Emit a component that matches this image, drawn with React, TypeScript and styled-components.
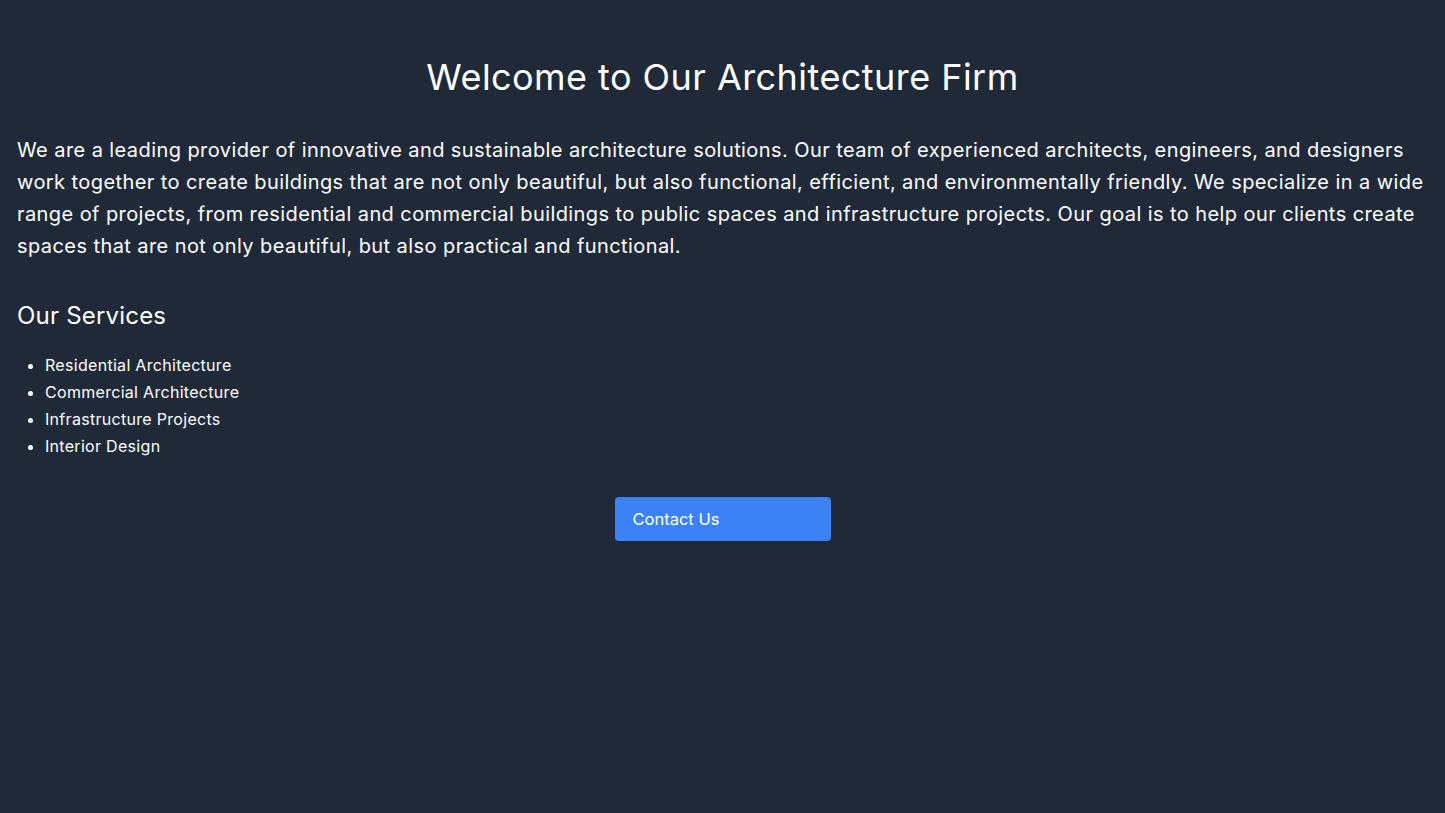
import React from "react";
import styled, { createGlobalStyle } from "styled-components";

const GlobalStyle = createGlobalStyle`
  html, body {
    margin: 0;
    padding: 0;
    background-color: #1f2937;
  }
  body {
    font-family: Inter, "Noto Sans", sans-serif;
    color: #ffffff;
  }
`;

const Page = styled.div`
  min-height: 813px;
  background-color: #1f2937;
  padding: 57px 16px 48px;
  box-sizing: border-box;
`;

const Title = styled.h1`
  margin: 0 0 37px;
  font-size: 36px;
  line-height: 40px;
  font-weight: 400;
  letter-spacing: 0.45px;
  text-align: center;
`;

const Intro = styled.p`
  margin: 0 0 38px;
  padding-left: 1px;
  font-size: 20px;
  line-height: 32px;
  letter-spacing: 0.42px;
`;

const SectionTitle = styled.h2`
  margin: 0 0 20px;
  padding-left: 1px;
  font-size: 24px;
  line-height: 32px;
  font-weight: 400;
  letter-spacing: 0.2px;
`;

const ServiceList = styled.ul`
  margin: 0 0 37px;
  padding-left: 29px;
  font-size: 16px;
  line-height: 27px;
  letter-spacing: 0.3px;
`;

const Actions = styled.div`
  display: flex;
  justify-content: center;
`;

const Button = styled.button`
  width: 216px;
  height: 44px;
  padding: 0 18px;
  border: none;
  border-radius: 4px;
  background-color: #3b82f6;
  color: #ffffff;
  font-family: inherit;
  font-size: 16.5px;
  text-align: left;
  cursor: pointer;
`;

const services = [
  "Residential Architecture",
  "Commercial Architecture",
  "Infrastructure Projects",
  "Interior Design",
];

const App: React.FC = () => {
  return (
    <Page>
      <GlobalStyle />
      <Title>Welcome to Our Architecture Firm</Title>
      <Intro>
        We are a leading provider of innovative and sustainable architecture
        solutions. Our team of experienced architects, engineers, and designers
        work together to create buildings that are not only beautiful, but also
        functional, efficient, and environmentally friendly. We specialize in a
        wide range of projects, from residential and commercial buildings to
        public spaces and infrastructure projects. Our goal is to help our
        clients create spaces that are not only beautiful, but also practical
        and functional.
      </Intro>
      <SectionTitle>Our Services</SectionTitle>
      <ServiceList>
        {services.map((s) => (
          <li key={s}>{s}</li>
        ))}
      </ServiceList>
      <Actions>
        <Button>Contact Us</Button>
      </Actions>
    </Page>
  );
};

export default App;
